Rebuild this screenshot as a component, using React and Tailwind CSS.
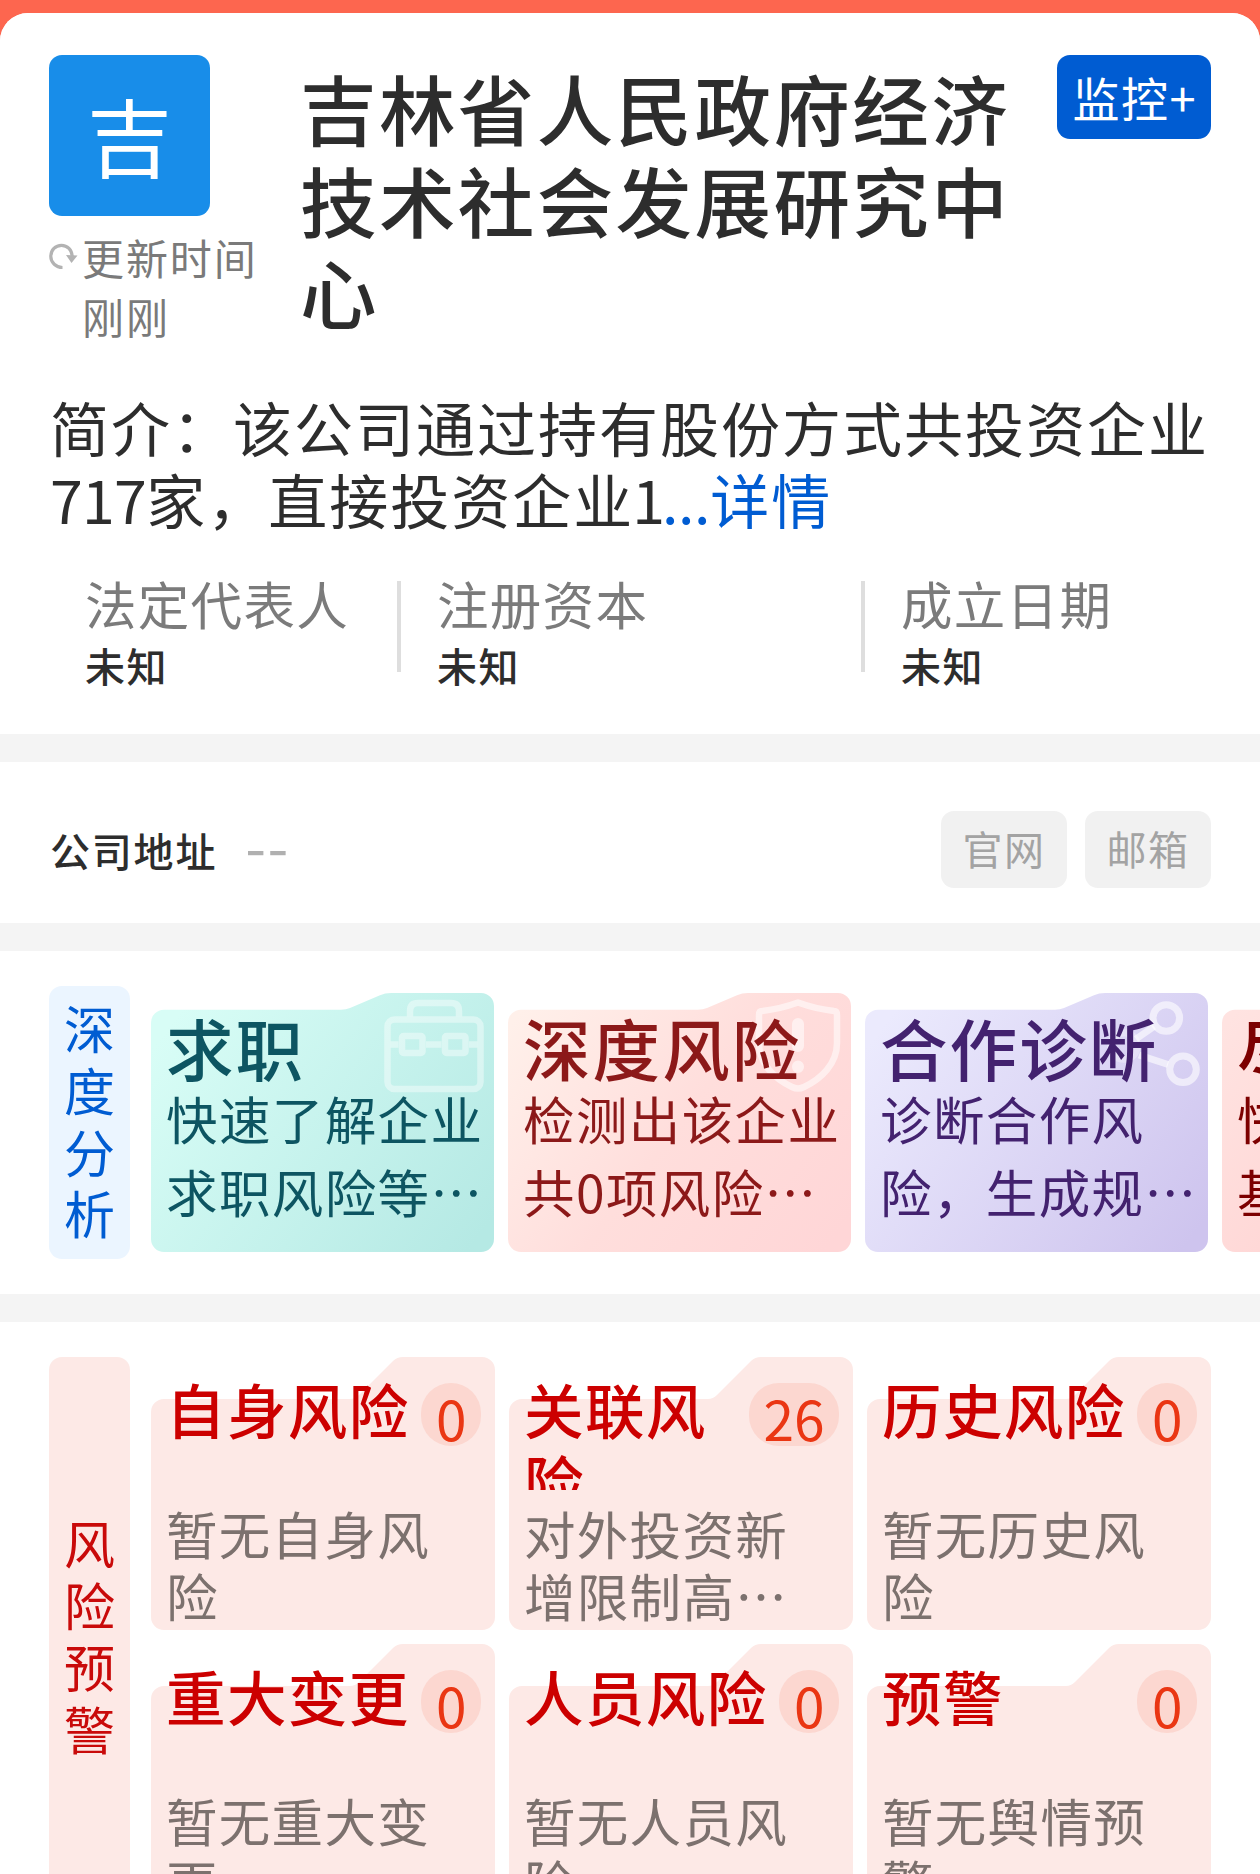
import React from "react";

const deepCards = [
  {
    title: "求职",
    lines: ["快速了解企业", "求职风险等…"],
    tone: "text-[#0d5562] bg-[linear-gradient(127deg,#d8fdf6_8%,#b5e9e4_95%)]",
    icon: "case",
  },
  {
    title: "深度风险",
    lines: ["检测出该企业", "共0项风险…"],
    tone: "text-[#8c1919] bg-[linear-gradient(127deg,#fff0ea_5%,#ffdedc_50%,#ffd6d7_95%)]",
    icon: "shield",
  },
  {
    title: "合作诊断",
    lines: ["诊断合作风", "险，生成规…"],
    tone: "text-[#43226f] bg-[linear-gradient(127deg,#ebeafd_8%,#cec4ee_95%)]",
    icon: "share",
  },
  {
    title: "尽职调查",
    lines: ["快速了解企业", "基本情况等…"],
    tone: "text-[#7d0000] bg-[linear-gradient(127deg,#ffe3e1_5%,#ffc9c9_95%)]",
    icon: null,
  },
];

const riskCards = [
  { title: "自身风险", count: 0, lines: ["暂无自身风", "险"] },
  { title: "关联风险", count: 26, lines: ["对外投资新", "增限制高…"] },
  { title: "历史风险", count: 0, lines: ["暂无历史风", "险"] },
  { title: "重大变更", count: 0, lines: ["暂无重大变", "更"] },
  { title: "人员风险", count: 0, lines: ["暂无人员风", "险"] },
  { title: "预警", count: 0, lines: ["暂无舆情预", "警"] },
];

function CardIcon({ name }) {
  if (name === "case") {
    return (
      <svg className="absolute left-[232px] top-[6px]" width="102" height="96" viewBox="0 0 102 96" fill="none" stroke="#fff" strokeOpacity="0.42" strokeWidth="6.500">
        <path d="M27 17.500V12Q27 4 35 4H68Q76 4 76 12V17.500" />
        <rect x="4.500" y="20.500" width="93" height="69.500" rx="7" />
        <rect x="19" y="37" width="20.500" height="17" rx="1.500" />
        <rect x="62" y="37" width="20.500" height="17" rx="1.500" />
        <path d="M7.500 45.500H15.500M43 45.500H58.500M86 45.500H94.500" />
      </svg>
    );
  }
  if (name === "shield") {
    return (
      <svg className="absolute left-[246px] top-[5px]" width="88" height="98" viewBox="0 0 88 98" fill="none" stroke="#fff" strokeOpacity="0.55" strokeLinejoin="round">
        <path strokeWidth="6.500" d="M44 4.500Q62 11 80 13Q83 13 83 17V45C83 66 67 81 50 89Q44 92 38 89C21 81 5 66 5 45V17Q5 13 8 13Q26 11 44 4.500Z" />
        <path strokeWidth="12" strokeLinecap="round" d="M44 26V48M44 68.500V69" />
      </svg>
    );
  }
  if (name === "share") {
    return (
      <svg className="absolute left-[235px] top-[5px]" width="104" height="92" viewBox="0 0 104 92" fill="none" stroke="#fff" strokeOpacity="0.6" strokeWidth="7">
        <circle cx="66.300" cy="20" r="13.300" />
        <circle cx="83" cy="71.300" r="13.300" />
        <circle cx="24" cy="48" r="13.300" strokeOpacity="0.3" />
        <path d="M54 28.500L36 41M39 57L68 66.500" />
      </svg>
    );
  }
  return null;
}

function DeepCard({ card }) {
  return (
    <div
      className={`relative h-[259px] w-[343px] shrink-0 pl-[15px] pt-[19px] ${card.tone} [clip-path:path('M13,16.700_H190_Q195,16.700_199,15_L229,2.300_Q234,0_240,0_H330_A13,13_0_0_1_343,13_V246_A13,13_0_0_1_330,259_H13_A13,13_0_0_1_0,246_V29.700_A13,13_0_0_1_13,16.700_Z')]`}
    >
      <CardIcon name={card.icon} />
      <div className="relative whitespace-nowrap text-[67.5px] font-medium leading-[70px] tracking-[2.1px]">{card.title}</div>
      <div className="relative -mt-[1px] whitespace-nowrap text-[51.5px] leading-[73px] tracking-[1.4px]">
        {card.lines.map((l) => (
          <div key={l}>{l}</div>
        ))}
      </div>
    </div>
  );
}

function RiskCard({ card }) {
  return (
    <div className="relative h-[273px] pl-[15px] pr-[14px]">
      <div className="absolute inset-0 bg-[#fde9e6] [clip-path:path('M13,42_H199_Q204,42_208,38_L242,4_Q246,0_252,0_H331_A13,13_0_0_1_344,13_V260_A13,13_0_0_1_331,273_H13_A13,13_0_0_1_0,260_V55_A13,13_0_0_1_13,42_Z')]" />
      <div className="relative flex h-[133px] items-start justify-between overflow-hidden pt-[15px]">
        <div className="min-w-0 flex-1 text-[59.5px] font-medium leading-[72px] tracking-[1.4px] text-[#cc0000]">{card.title}</div>
        <div className="mt-[11px] h-[63px] shrink-0 rounded-[30px] bg-[#fcd7d0] px-[14.500px] pt-[5px] text-[55px] leading-[58px] text-[#ea3613]">
          {card.count}
        </div>
      </div>
      <div className="relative mt-[12px] whitespace-nowrap text-[51.5px] leading-[62px] tracking-[1.3px] text-[#7c716e]">
        {card.lines.map((l) => (
          <div key={l}>{l}</div>
        ))}
      </div>
    </div>
  );
}

function SideLabel({ text, tone }) {
  return (
    <div className={`flex w-[81px] shrink-0 flex-col items-center justify-center rounded-[13px] pb-[4px] text-[51px] leading-[61.800px] ${tone}`}>
      {text.split("").map((c) => (
        <span key={c}>{c}</span>
      ))}
    </div>
  );
}

function Fact({ label, className }) {
  return (
    <div className={className}>
      <div className="mt-[2px] whitespace-nowrap text-[51.5px] leading-[60px] tracking-[1.3px] text-[#7b7b7b]">{label}</div>
      <div className="mt-[8px] text-[40px] font-medium leading-[48px] tracking-[1.5px]">未知</div>
    </div>
  );
}

export default function App() {
  return (
    <div
      lang="zh-CN"
      className="h-[1874px] w-[1260px] overflow-hidden bg-[#fd664f] pt-[13px] font-['Noto_Sans_CJK_SC',sans-serif] text-[#2d2d2d]"
    >
      <div className="h-[1861px] overflow-hidden rounded-t-[28px] bg-[#f4f4f4]">
        <section className="h-[721px] bg-white">
          <div className="flex h-[378px] px-[49px] pt-[42px]">
            <div className="w-[251px] shrink-0">
              <div className="flex h-[161px] w-[161px] items-center justify-center rounded-[13px] bg-[#188de9] pb-[3px] text-[85px] leading-[120px] text-white">吉</div>
              <div className="mt-[11px] flex">
                <svg className="mt-[16px] shrink-0" width="29" height="27" viewBox="0 0 29 27" fill="none">
                  <path d="M13.500 24.500C7 24.500 1.800 19.500 1.800 13.500C1.800 7 6.500 2.300 12.500 2.300C18.500 2.300 22.800 7 23.200 13" stroke="#b3b3b3" strokeWidth="3.200" />
                  <path d="M17 12L28.500 12.500L22.500 20Z" fill="#b3b3b3" />
                </svg>
                <div className="ml-[4px] whitespace-nowrap text-[42px] leading-[59.300px] tracking-[1.9px] text-[#7a7a7a]">
                  更新时间
                  <br />
                  刚刚
                </div>
              </div>
            </div>
            <h1 className="mt-[6px] w-[717px] shrink-0 text-[76.500px] font-medium leading-[92px] tracking-[2.400px]">
              吉林省人民政府经济技术社会发展研究中心
            </h1>
            <button className="ml-[40px] h-[84px] w-[154px] shrink-0 whitespace-nowrap rounded-[13px] bg-[#005cd2] text-[47px] leading-[82px] tracking-[1.5px] text-white">
              监控<span className="tracking-[0px]">+</span>
            </button>
          </div>
          <p className="whitespace-nowrap pl-[50px] text-[59px] leading-[72px] tracking-[2px]">
            简介：该公司通过持有股份方式共投资企业
            <br />
            <span className="tracking-[-0.700px]">717</span>家，直接投资企业<span className="-ml-[2px] tracking-[-3px]">1</span>
            <span className="text-[#005cd2]">
              <span className="tracking-[-0.300px]">...</span>详情
            </span>
          </p>
          <div className="mt-[36px] flex pl-[85px]">
            <Fact label="法定代表人" className="w-[312px]" />
            <div className="mt-[10px] h-[91px] w-[4px] bg-[#dedede]" />
            <Fact label="注册资本" className="w-[460px] pl-[36px]" />
            <div className="mt-[10px] h-[91px] w-[4px] bg-[#dedede]" />
            <Fact label="成立日期" className="pl-[36px]" />
          </div>
        </section>

        <section className="mt-[28px] flex h-[161px] items-center bg-white pl-[50px] pr-[49px] pt-[14px]">
          <span className="text-[40px] font-medium leading-[50px] tracking-[1.800px]">公司地址</span>
          <span className="mb-[12px] ml-[28px] text-[60px] leading-[50px] tracking-[1.500px] text-[#b0b0b0]">--</span>
          <div className="ml-auto flex gap-[18px] text-[40px] leading-[74px] tracking-[1.500px] text-[#a3a3a3]">
            <button className="h-[77px] w-[126px] rounded-[13px] bg-[#f1f1f1] pb-[3px]">官网</button>
            <button className="h-[77px] w-[126px] rounded-[13px] bg-[#f1f1f1] pb-[3px]">邮箱</button>
          </div>
        </section>

        <section className="mt-[28px] flex h-[343px] overflow-hidden bg-white pl-[49px] pt-[35px]">
          <SideLabel text="深度分析" tone="h-[273px] bg-[#ebf5ff] text-[#005cd2]" />
          <div className="ml-[21px] mt-[7px] flex gap-[14px]">
            {deepCards.map((c) => (
              <DeepCard key={c.title} card={c} />
            ))}
          </div>
        </section>

        <section className="mt-[28px] flex bg-white pl-[49px] pt-[35px] pb-[49px]">
          <SideLabel text="风险预警" tone="h-[562px] bg-[#fde9e6] text-[#c90a0a]" />
          <div className="ml-[21px] grid grid-cols-[344px_344px_344px] content-start gap-[14px]">
            {riskCards.map((c) => (
              <RiskCard key={c.title} card={c} />
            ))}
          </div>
        </section>
      </div>
    </div>
  );
}
